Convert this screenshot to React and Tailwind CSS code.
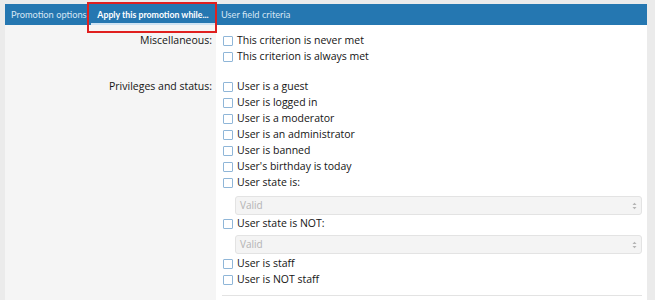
import React from "react";

const FONT = { fontFamily: '"Segoe UI", "Open Sans", "Noto Sans", sans-serif' };
const TAB_FONT = { fontFamily: 'Lato, "Open Sans", sans-serif' };

function Check({ label }) {
  return (
    <div className="flex h-4 items-center">
      <span className="mr-[4px] ml-[1px] inline-block h-[10px] w-[10px] rounded-[1px] border border-[#8fb6d8] bg-white" />
      <span className="text-[10.5px] text-[#141414]">{label}</span>
    </div>
  );
}

function FakeSelect({ value }) {
  return (
    <div className="ml-[13px] mr-[5px] flex h-[19px] items-center justify-between rounded-[3px] border border-[#e3e3e3] bg-[#f4f4f4] pl-[4px] pr-[4px]">
      <span className="text-[10px] text-[#b3b3b3]">{value}</span>
      <svg width="5" height="8" viewBox="0 0 5 8">
        <path d="M0.5 3 L2.5 0.8 L4.5 3 Z" fill="#b3b3b3" />
        <path d="M0.5 5 L2.5 7.2 L4.5 5 Z" fill="#b3b3b3" />
      </svg>
    </div>
  );
}

function Row({ label, children }) {
  return (
    <div className="flex">
      <div className="w-[211px] shrink-0 bg-[#f5f5f5] pr-[4px] text-right">
        <div className="flex h-4 items-center justify-end text-[10.5px] text-[#141414]">{label}</div>
      </div>
      <div className="flex-1 bg-white pl-[6px]">{children}</div>
    </div>
  );
}

export default function App() {
  return (
    <div className="h-[300px] w-[655px] overflow-hidden bg-[#ebebeb] pt-[4px] pl-[5px]" style={FONT}>
      <div className="relative w-[642px]">
        {/* tabs */}
        <div className="flex h-[21px] items-stretch bg-[#2577b1] text-[9.25px]" style={TAB_FONT}>
          <div className="flex w-[86px] shrink-0 items-center whitespace-nowrap pl-[6px] text-[#d5e6f4]">Promotion options</div>
          <div className="flex w-[124px] shrink-0 items-center justify-center whitespace-nowrap border-b-2 border-[#cfe3f3] pt-[2px] text-[8.75px] font-bold text-white">
            Apply this promotion while...
          </div>
          <div className="flex items-center whitespace-nowrap pl-[6px] text-[9.25px] text-[#d5e6f4]">User field criteria</div>
        </div>
        {/* annotation box */}
        <div className="absolute left-[82px] top-[-2px] h-[31px] w-[130px] border-2 border-[#e0201f]" />

        {/* body */}
        <div className="flex flex-col">
          <div className="flex">
            <div className="h-[8px] w-[211px] bg-[#f5f5f5]" />
            <div className="flex-1 bg-white" />
          </div>
          <Row label="Miscellaneous:">
            <Check label="This criterion is never met" />
            <Check label="This criterion is always met" />
          </Row>
          <div className="flex">
            <div className="h-[14px] w-[211px] bg-[#f5f5f5]" />
            <div className="flex-1 bg-white" />
          </div>
          <Row label="Privileges and status:">
            <Check label="User is a guest" />
            <Check label="User is logged in" />
            <Check label="User is a moderator" />
            <Check label="User is an administrator" />
            <Check label="User is banned" />
            <Check label="User's birthday is today" />
            <Check label="User state is:" />
            <div className="pt-[5px] pb-[1px]">
              <FakeSelect value="Valid" />
            </div>
            <Check label="User state is NOT:" />
            <div className="pt-[3px] pb-[2px]">
              <FakeSelect value="Valid" />
            </div>
            <Check label="User is staff" />
            <Check label="User is NOT staff" />
            <div className="h-[7px]" />
            <div className="mr-[5px] border-t border-[#e3e3e3]" />
            <div className="h-[20px]" />
          </Row>
        </div>
      </div>
    </div>
  );
}
